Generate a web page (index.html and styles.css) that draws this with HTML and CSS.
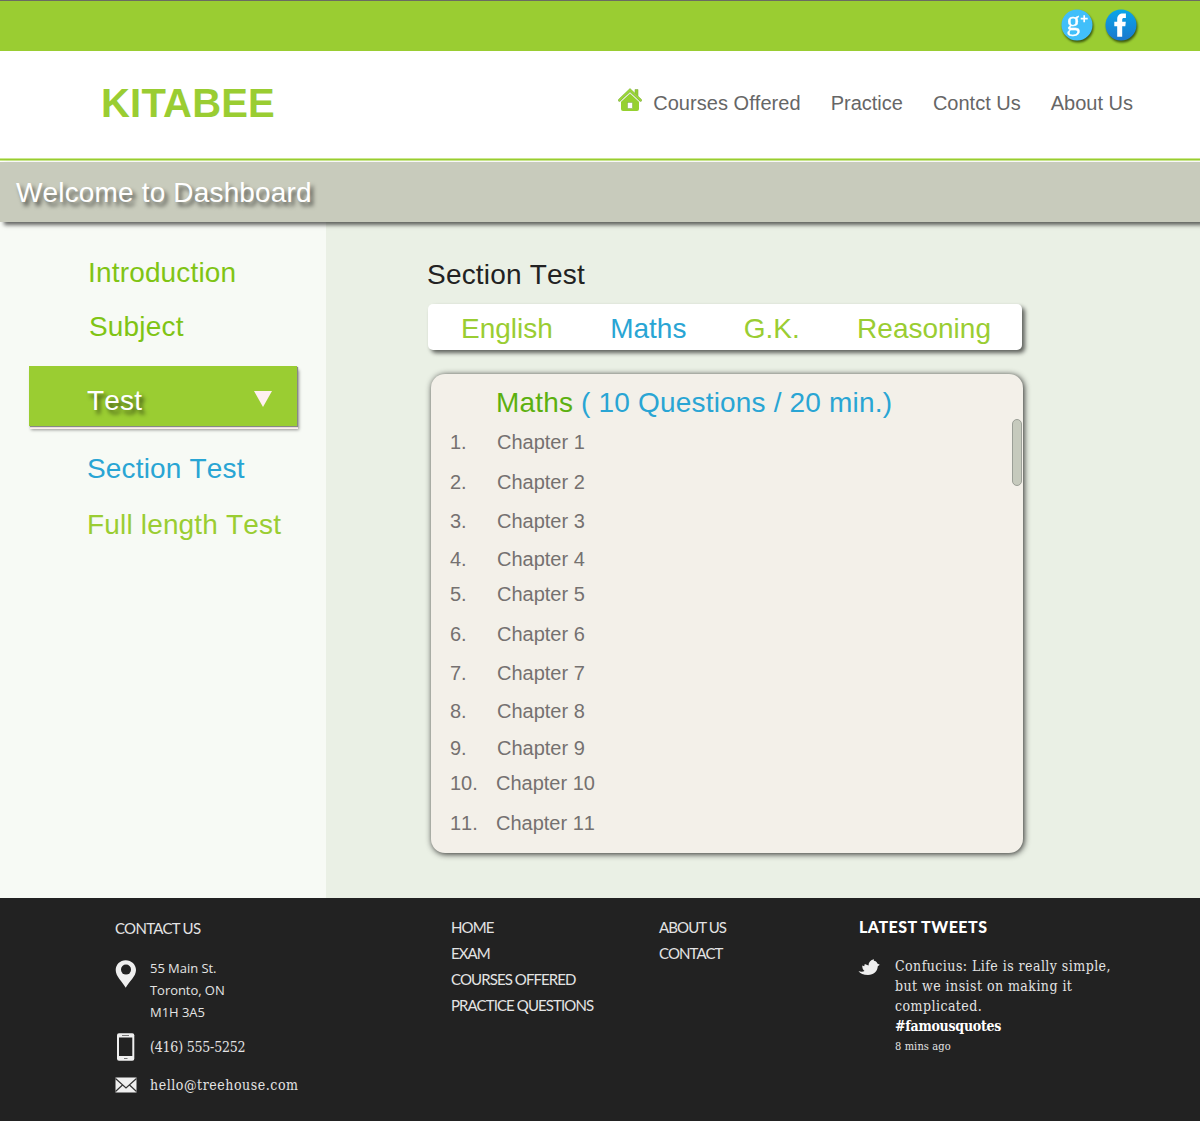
FILE: index.html
```html
<!DOCTYPE html>
<html lang="en">
<head>
<meta charset="utf-8">
<title>Kitabee – Dashboard</title>
<link rel="stylesheet" href="styles.css">
</head>
<body>
<div class="topbar">
  <svg class="social" viewBox="0 0 36 36" width="36" height="36" aria-label="Google Plus">
    <circle cx="16" cy="16" r="15.5" fill="#41bffa"/>
    <text class="g" x="5.500" y="20.500">g</text>
    <path d="M23.200 6.200v7M19.700 9.700h7" fill="none" stroke="#fff" stroke-width="1.700"/>
  </svg>
  <svg class="social" viewBox="0 0 36 36" width="36" height="36" aria-label="Facebook">
    <defs><linearGradient id="fb" x1="0" y1="0" x2="0" y2="1"><stop offset="0" stop-color="#08a6e9"/><stop offset="1" stop-color="#1c78cd"/></linearGradient></defs>
    <circle cx="16" cy="16" r="15.500" fill="url(#fb)"/>
    <path d="M12.200 27.800V17.200H9.300v-4.500h2.900V10.200c0-3.900 2.300-5.700 5.700-5.700h3v4.500h-1.800c-1.400 0-1.900.6-1.900 1.700v2h3.600l-.5 4.500h-3.100v10.600z" fill="#fff"/>
  </svg>
</div>
<header class="header">
  <div class="logo">KITABEE</div>
  <nav class="nav">
    <a class="nav-home"><svg viewBox="0 0 26 24" width="26" height="24">
      <path d="M4 13.500L13 5l9 8.500V21q0 2-2 2H6q-2 0-2-2z" fill="#96d130"/>
      <path d="M18 1.500h3v7l-3-2.700z" fill="#96d130" stroke="#86ad4e" stroke-width=".6"/>
      <path d="M2.500 12.300L13 2.200l10.500 10.100" fill="none" stroke="#82ab45" stroke-width="2.800" stroke-linecap="round"/>
      <path d="M2.500 12L13 2l10.500 10" fill="none" stroke="#9bd63a" stroke-width="2" stroke-linecap="round"/>
      <path d="M3.300 14L13 5.200l9.700 8.800" fill="none" stroke="#e6efd8" stroke-width=".9"/>
      <rect x="10.500" y="14.500" width="5" height="6" fill="#fff" stroke="#80a850" stroke-width=".5"/>
    </svg></a>
    <a>Courses Offered</a>
    <a>Practice</a>
    <a>Contct Us</a>
    <a>About Us</a>
  </nav>
</header>
<div class="welcome">Welcome to Dashboard</div>
<div class="body">
  <aside class="sidebar">
    <a class="side-link intro">Introduction</a>
    <a class="side-link subject">Subject</a>
    <a class="side-current"><span>Test</span><i class="caret"></i></a>
    <a class="side-link section">Section Test</a>
    <a class="side-link full">Full length Test</a>
  </aside>
  <main class="main">
    <h1>Section Test</h1>
    <div class="tabs"><a>English</a><a class="active">Maths</a><a>G.K.</a><a>Reasoning</a></div>
    <section class="panel">
      <h2>Maths <span>( 10 Questions / 20 min.)</span></h2>
      <ol class="chapters">
        <li><b>1.</b>Chapter 1</li>
        <li><b>2.</b>Chapter 2</li>
        <li><b>3.</b>Chapter 3</li>
        <li><b>4.</b>Chapter 4</li>
        <li><b>5.</b>Chapter 5</li>
        <li><b>6.</b>Chapter 6</li>
        <li><b>7.</b>Chapter 7</li>
        <li><b>8.</b>Chapter 8</li>
        <li><b>9.</b>Chapter 9</li>
        <li><b>10.</b>Chapter 10</li>
        <li><b>11.</b>Chapter 11</li>
      </ol>
      <div class="thumb"></div>
    </section>
  </main>
</div>
<footer class="footer">
  <div class="contact">
    <h3>CONTACT US</h3>
    <div class="row place">
      <svg viewBox="0 0 22 28" width="22" height="28"><path d="M10.700.3C5 .3.700 4.700.700 10c0 6.500 6.500 11.500 10 17.700C14.200 21.500 21 16.500 21 10 21 4.700 16.400.3 10.700.3z" fill="#efefef"/><circle cx="11" cy="9.600" r="5" fill="#222"/></svg>
      <p>55 Main St.<br>Toronto, ON<br>M1H 3A5</p>
    </div>
    <div class="row phone">
      <svg viewBox="0 0 22 28" width="22" height="28"><rect x="2" y=".3" width="17.300" height="27.400" rx="2" fill="#efefef"/><rect x="4" y="4.500" width="13.300" height="18.500" fill="#222"/><path d="M7 2.500h7M9 25.500h3.500" stroke="#777" stroke-width="1.200"/></svg>
      <p>(416) 555-5252</p>
    </div>
    <div class="row mail">
      <svg viewBox="0 0 22 16" width="22" height="16"><rect x=".5" y=".5" width="21" height="15" fill="#efefef"/><path d="M.5 1.500L11 11 21.500 1.500M.5 14.500l7-6.500M21.500 14.500l-7-6.500" fill="none" stroke="#333" stroke-width="1.200"/></svg>
      <p>hello@treehouse.com</p>
    </div>
  </div>
  <div class="links first"><a>HOME</a><a>EXAM</a><a>COURSES OFFERED</a><a>PRACTICE QUESTIONS</a></div>
  <div class="links second"><a>ABOUT US</a><a>CONTACT</a></div>
  <div class="tweets">
    <h3>LATEST TWEETS</h3>
    <div class="tweet">
      <svg viewBox="0 0 22 18" width="22" height="18"><path d="M-.5 13c2.200 1 4.500.9 6-.1C4 12 3.300 10.500 3.200 7.500l2 .8.600-2.300 3.700 1.600C9.500 4.500 11.500 2 15 1.300l-.2 1.500c2 .2 3.200 1.200 3.500 2.800l2.500 1.200-2 1.400c-.3 5-4 8.700-9.800 8.700-4.300 0-8-1.200-9.500-3.900z" fill="#efefef"/></svg>
      <div class="copy">
        <p>Confucius: Life is really simple,</p>
        <p>but we insist on making it</p>
        <p>complicated.</p>
        <p class="tag">#famousquotes</p>
        <p class="time">8 mins ago</p>
      </div>
    </div>
  </div>
</footer>
</body>
</html>
```
FILE: styles.css
```css
* { box-sizing: border-box; margin: 0; padding: 0; }
body { width: 1200px; height: 1121px; background: #fff; font-family: "Liberation Sans", Arial, sans-serif; font-kerning: none; overflow: hidden; }
a, p, h1, h2, h3, li, .logo { white-space: nowrap; }
ol { list-style: none; }
svg { display: block; flex: none; overflow: visible; }

.topbar { height: 51px; background: #9acd32; border-top: 1px solid #6b6b62; display: flex; justify-content: flex-end; gap: 8px; padding: 8px 59px 0 0; }
.social { filter: drop-shadow(1px 2px 1px rgba(30, 50, 0, .75)); }
.g { font: 27px "Liberation Serif", serif; fill: #fff; stroke: #fff; stroke-width: .3px; }

.header { height: 111px; display: flex; justify-content: space-between; padding: 0 67px 0 101px; border-bottom: 1px solid #fff; background: linear-gradient(#cbe88f 0 1px, #9acd32 1px 2px, #cbe88f 2px 3px) left bottom / 100% 3px no-repeat; }
.logo { font-size: 40px; font-weight: bold; line-height: 46px; color: #9acd32; padding-top: 29px; font-kerning: normal; letter-spacing: .2px; }
.nav { display: flex; color: #666; font-size: 20px; line-height: 24px; padding-top: 40px; gap: 30px; }
.nav a:nth-child(2) { letter-spacing: .05px; }
.nav-home { margin: -3px -20px 0 0; }

.welcome { height: 60px; background: #c8cbbc; color: #fff; font-size: 28px; line-height: 62px; padding-left: 16px; letter-spacing: .16px; text-shadow: 3px 4px 4px rgba(0, 0, 0, .6); box-shadow: 4px 3px 4px rgba(0, 0, 0, .6); position: relative; }

.body { display: flex; height: 676px; }
.sidebar { width: 326px; background: #f7faf5; display: flex; flex-direction: column; }
.side-link { font-size: 28px; line-height: 32px; color: #9acd32; padding-left: 88px; letter-spacing: .17px; }
.intro { margin-top: 35px; color: #80c414; }
.subject { margin-top: 22px; color: #80c414; padding-left: 89px; }
.side-current { margin: 23px 0 0 29px; width: 268px; height: 60px; background: #9acd32; color: #fff; font-size: 28px; line-height: 69px; padding: 0 25px 0 58px; display: flex; justify-content: space-between; letter-spacing: .2px; text-shadow: 3px 4px 4px rgba(0, 0, 0, .6); box-shadow: 1px 1px 1px #888, 1px 3px 0 #fdf0ee, 2px 4px 3px rgba(0, 0, 0, .4); }
.caret { margin-top: 25px; width: 18px; height: 16px; background: #fff0f0; clip-path: polygon(0 0, 100% 0, 50% 100%); }
.section { margin-top: 27px; color: #29a5d4; padding-left: 87px; }
.full { margin-top: 24px; padding-left: 87px; }

.main { flex: 1; background: #eaf0e5; padding: 37px 0 0 102px; }
h1 { font-size: 28px; line-height: 32px; font-weight: normal; color: #222; margin-left: -1px; letter-spacing: .2px; }
.tabs { width: 594px; height: 46px; margin-top: 13px; border-radius: 5px; background: #fff; box-shadow: 3px 3px 4px rgba(0, 0, 0, .6); display: flex; font-size: 28px; line-height: 49px; color: #9acd32; padding: 0 31px 0 33px; justify-content: space-between; }
.active { color: #29a5d4; }
.panel { width: 592px; height: 479px; margin: 24px 0 0 3px; border-radius: 14px; background: #f3f0e9; box-shadow: 1px 1px 6px rgba(0, 0, 0, .85); position: relative; padding: 13px 0 0 19px; }
h2 { font-size: 28px; line-height: 32px; font-weight: normal; color: #5cb010; padding-left: 46px; letter-spacing: .18px; }
h2 span { color: #29a5d4; }
.chapters { color: #757170; font-size: 20px; line-height: 24px; padding-top: 11px; }
.chapters li { display: flex; height: 40px; }
.chapters b { width: 47px; font-weight: normal; }
.chapters li:nth-child(2), .chapters li:nth-child(6) { height: 39px; }
.chapters li:nth-child(3), .chapters li:nth-child(7) { height: 38px; }
.chapters li:nth-child(4), .chapters li:nth-child(9) { height: 35px; }
.chapters li:nth-child(8) { height: 37px; }
.chapters li:nth-child(n+10) b { width: 46px; }
.thumb { position: absolute; right: 1px; top: 45px; width: 10px; height: 67px; border-radius: 5px; background: #c6cabd; border: 1px solid #9b9f97; }

.footer { height: 223px; background: #222; color: #e4e4e4; display: flex; font: 15px/26px Lato, sans-serif; font-kerning: normal; }
.contact { width: 451px; padding: 17px 0 0 115px; }
.contact h3 { font-weight: normal; font-size: 15px; line-height: 26px; letter-spacing: -.7px; }
.row { display: flex; gap: 13px; font-family: "DejaVu Serif Condensed", "DejaVu Serif", serif; font-size: 14px; font-stretch: condensed; }
.place { margin-top: 19px; font: 13px/22px "Open Sans", sans-serif; }
.place p { margin-top: -3px; letter-spacing: -.05px; }
.phone { margin-top: 10px; letter-spacing: -.2px; }
.phone p { margin-top: 1px; }
.mail { margin-top: 16px; letter-spacing: .55px; }
.mail p { margin-top: -5px; }
.links { display: flex; flex-direction: column; align-items: flex-start; padding-top: 16px; width: 208px; letter-spacing: -.9px; }
.second { width: 200px; }
.tweets { padding-top: 16px; }
.tweets h3 { font-size: 16px; line-height: 26px; font-weight: 900; color: #fff; letter-spacing: .5px; }
.tweet { display: flex; gap: 14px; margin-top: 18px; font: 14px/20px "DejaVu Serif Condensed", "DejaVu Serif", serif; font-stretch: condensed; letter-spacing: .45px; }
.copy { margin-top: -2px; }
.tag { font-weight: bold; color: #fff; letter-spacing: -.25px; }
.time { font-size: 11px; line-height: 22px; letter-spacing: .1px; }
```
